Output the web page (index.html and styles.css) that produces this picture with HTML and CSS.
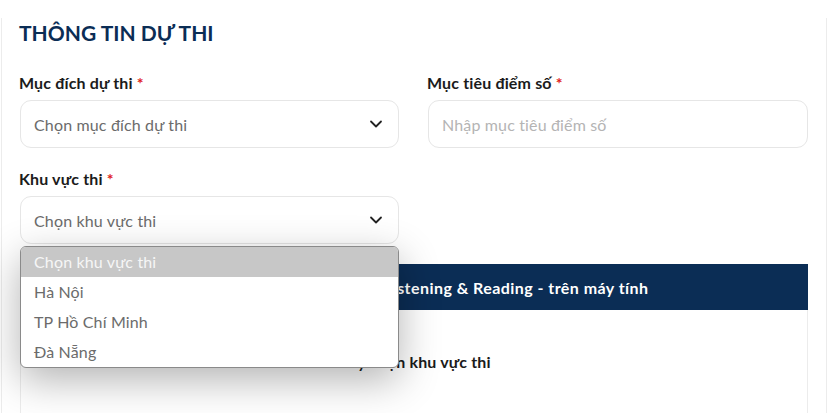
FILE: index.html
```html
<!DOCTYPE html>
<html lang="vi">
<head>
<meta charset="utf-8">
<link rel="stylesheet" href="styles.css">
</head>
<body>
<div class="page">
  <h1 class="title">THÔNG TIN DỰ THI</h1>
  <div class="grid">
    <div class="field">
      <label class="label">Mục đích dự thi <span class="req">*</span></label>
      <div class="control select">
        <span class="ph-dark">Chọn mục đích dự thi</span>
        <svg class="chev" width="14" height="14" viewBox="0 0 14 14"><path d="M2 4.5 L7 9.5 L12 4.5" fill="none" stroke="#222" stroke-width="1.8" stroke-linecap="round" stroke-linejoin="round"/></svg>
      </div>
    </div>
    <div class="field">
      <label class="label">Mục tiêu điểm số <span class="req">*</span></label>
      <div class="control">
        <span class="ph-light">Nhập mục tiêu điểm số</span>
      </div>
    </div>
    <div class="field">
      <label class="label">Khu vực thi <span class="req">*</span></label>
      <div class="control select">
        <span class="ph-dark">Chọn khu vực thi</span>
        <svg class="chev" width="14" height="14" viewBox="0 0 14 14"><path d="M2 4.5 L7 9.5 L12 4.5" fill="none" stroke="#222" stroke-width="1.8" stroke-linecap="round" stroke-linejoin="round"/></svg>
      </div>
      <ul class="dropdown">
        <li class="opt active">Chọn khu vực thi</li>
        <li class="opt">Hà Nội</li>
        <li class="opt">TP Hồ Chí Minh</li>
        <li class="opt">Đà Nẵng</li>
      </ul>
    </div>
  </div>
  <div class="schedule">
    <div class="band">Lịch thi bài thi TOEIC Listening &amp; Reading - trên máy tính</div>
    <div class="panel">Hãy chọn khu vực thi</div>
  </div>
</div>
</body>
</html>
```
FILE: styles.css
```css
* { box-sizing: border-box; }
html, body { margin: 0; padding: 0; background: #fff; }
body {
  font-family: "Lato", "Noto Sans", sans-serif;
  color: #1b1b1b;
  overflow: hidden;
  height: 413px;
}
.page {
  margin: 18px 2px 0 1px;
  border-left: 1px solid #ececec;
  border-right: 1px solid #ececec;
  padding: 0 18px 0 17px;
  height: 400px;
}
.title {
  margin: 0;
  font-size: 21px;
  font-weight: 700;
  color: #0b2d55;
  line-height: 30px;
}
.grid {
  margin-top: 25px;
  display: grid;
  grid-template-columns: 380px 381px;
  column-gap: 28px;
  row-gap: 21px;
}
.field { position: relative; }
.label {
  display: block;
  font-size: 16px;
  font-weight: 700;
  line-height: 20px;
  letter-spacing: 0.15px;
  color: #1b1b1b;
  margin-bottom: 7px;
}
.req { color: #e02020; font-weight: 700; }
.control {
  height: 48px;
  border: 1px solid #e6e6e6;
  border-radius: 11px;
  display: flex;
  align-items: center;
  padding: 0 13px;
  font-size: 16px;
  letter-spacing: 0.15px;
  background: #fff;
}
.field .control { margin-left: 1px; }
.select { justify-content: space-between; padding-right: 15px; }
.ph-dark { color: #6b6b6b; }
.ph-light { color: #b4b4b4; }
.chev { display: block; }
.dropdown {
  position: absolute;
  left: 1px;
  right: 0;
  top: 77px;
  margin: 0;
  padding: 0;
  list-style: none;
  background: #fff;
  border: 1px solid #8a8a8a;
  border-radius: 6px;
  overflow: hidden;
  box-shadow: 0 12px 40px rgba(0,0,0,0.3);
  z-index: 5;
}
.opt {
  height: 30px;
  line-height: 30px;
  padding: 0 13px;
  font-size: 16px;
  letter-spacing: 0.15px;
  color: #6b6b6b;
}
.opt.active { background: #c7c7c7; color: #f6f6f6; }
.schedule { margin-top: 20px; margin-left: 1px; }
.band {
  height: 46px;
  background: #0b2d55;
  color: #fff;
  font-weight: 700;
  font-size: 16px;
  letter-spacing: 0.45px;
  display: flex;
  align-items: center;
  justify-content: center;
  padding-left: 40px;
}
.panel {
  height: 110px;
  border: 1px solid #ececec;
  border-top: none;
  border-radius: 0 0 6px 6px;
  display: flex;
  justify-content: center;
  padding-top: 42px;
  font-size: 16px;
  font-weight: 700;
  letter-spacing: 0.15px;
  color: #1b1b1b;
}
```
